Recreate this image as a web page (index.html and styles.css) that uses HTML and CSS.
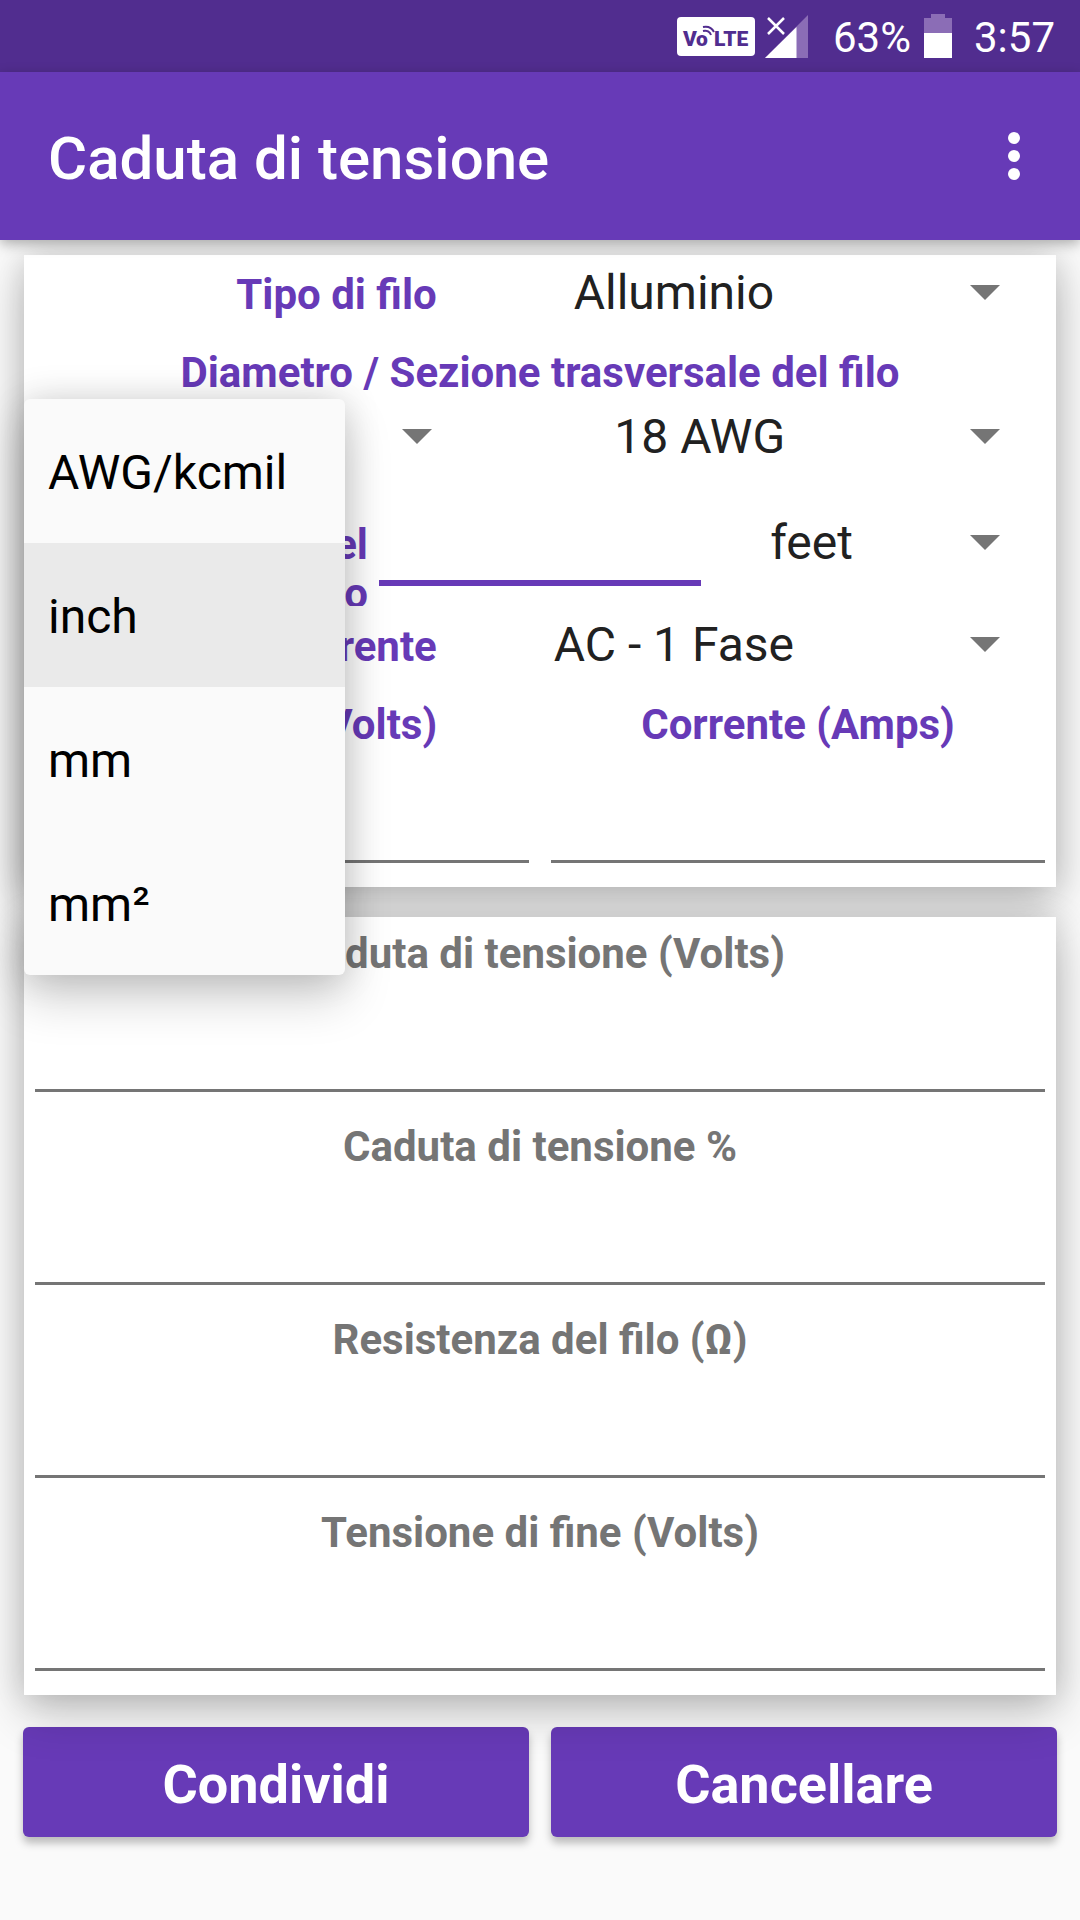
FILE: index.html
```html
<!DOCTYPE html>
<html lang="it">
    <head>
        <meta charset="utf-8">
        <meta name="viewport" content="width=device-width">
        <title>Caduta di tensione</title>
        <link rel="stylesheet" href="styles.css">
    </head>
    <body>
        <div class="status">
            <svg class="volte" width="78" height="39" viewBox="0 0 78 39">
                <rect width="78" height="39" rx="4" fill="#fff"/>
                <g class="volte-text">
                    <text x="6" y="29">V</text>
                    <text x="19" y="29">o</text>
                    <text x="37" y="29">LTE</text>
                </g>
                <g fill="none" stroke="#512d8f" stroke-width="2">
                    <path d="M26 10c5-1 9 1 11 5"/>
                    <path d="M26 14c4-1 7 1 8 4"/>
                </g>
            </svg>
            <svg class="signal" width="43" height="43" viewBox="0 0 43 43">
                <path d="M43 0v43H0z" fill="#8b6db6"/>
                <path d="M31.500 12v31H0z" fill="#fff"/>
                <path d="M3 3l16 16M19 3L3 19" stroke="#512d8f" stroke-width="5"/>
                <path d="M3 3l16 16M19 3L3 19" stroke="#fff" stroke-width="2.500"/>
            </svg>
            <span class="percent">63%</span>
            <svg class="battery" width="28" height="44" viewBox="0 0 28 44">
                <path d="M7 0h14v4h7v15H0V4h7z" fill="#8b6db6"/>
                <path d="M0 19h28v25H0z" fill="#fff"/>
            </svg>
            <span class="time">3:57</span>
        </div>
        <header class="header">
            <h1>Caduta di tensione</h1>
            <button class="more" type="button" aria-label="Altre opzioni">
                <svg width="12" height="48" viewBox="0 0 12 48" fill="#fff">
                    <circle cx="6" cy="6" r="6"/>
                    <circle cx="6" cy="24" r="6"/>
                    <circle cx="6" cy="42" r="6"/>
                </svg>
            </button>
        </header>

        <form class="page">
            <!-- dati -->
            <section class="card inputs">
                <div class="row wide">
                    <label for="tipo">Tipo di filo</label>
                    <div class="spinner">
                        <select id="tipo">
                            <option>Rame</option>
                            <option selected>Alluminio</option>
                        </select>
                    </div>
                </div>
                <label class="title" for="sezione">Diametro / Sezione trasversale del filo</label>
                <div class="row size">
                    <div class="spinner">
                        <select id="unita" aria-label="Unità">
                            <option selected>AWG/kcmil</option>
                            <option>inch</option>
                            <option>mm</option>
                            <option>mm²</option>
                        </select>
                    </div>
                    <div class="spinner">
                        <select id="sezione">
                            <option>18 AWG</option>
                        </select>
                    </div>
                    <div class="menu">
                        <button type="button">AWG/kcmil</button>
                        <button type="button" class="current">inch</button>
                        <button type="button">mm</button>
                        <button type="button">mm²</button>
                    </div>
                </div>
                <div class="row length">
                    <label for="lunghezza">Lunghezza del filo</label>
                    <input class="active" type="text" id="lunghezza">
                    <div class="spinner">
                        <select aria-label="Unità di lunghezza">
                            <option>feet</option>
                            <option>m</option>
                        </select>
                    </div>
                </div>
                <div class="row wide">
                    <label for="corrente">Tipo di corrente</label>
                    <div class="spinner">
                        <select id="corrente">
                            <option>AC - 1 Fase</option>
                            <option>DC</option>
                        </select>
                    </div>
                </div>
                <div class="row half">
                    <div class="field">
                        <label for="volts">Tensione (Volts)</label>
                        <input type="text" id="volts">
                    </div>
                    <div class="field">
                        <label for="amps">Corrente (Amps)</label>
                        <input type="text" id="amps">
                    </div>
                </div>
            </section>

            <!-- risultati -->
            <section class="card results">
                <div class="field">
                    <label for="r1">Caduta di tensione (Volts)</label>
                    <input type="text" id="r1" readonly>
                </div>
                <div class="field">
                    <label for="r2">Caduta di tensione %</label>
                    <input type="text" id="r2" readonly>
                </div>
                <div class="field">
                    <label for="r3">Resistenza del filo (Ω)</label>
                    <input type="text" id="r3" readonly>
                </div>
                <div class="field">
                    <label for="r4">Tensione di fine (Volts)</label>
                    <input type="text" id="r4" readonly>
                </div>
            </section>

            <div class="buttons">
                <button type="button">Condividi</button>
                <button type="reset">Cancellare</button>
            </div>
        </form>
    </body>
</html>
```
FILE: styles.css
```css
* {
    margin: 0;
    padding: 0;
    box-sizing: border-box;
}
body {
    background: #fafafa;
    font-family: Roboto, sans-serif;
    color: #212121;
}
button, input, select {
    font-family: inherit;
    border: 0;
    border-radius: 0;
    background: none;
    outline: none;
}

/* status bar */
.status {
    display: flex;
    align-items: center;
    justify-content: flex-end;
    height: 72px;
    padding-right: 25px;
    background: #512d8f;
    color: #fff;
    font-size: 42px;
    line-height: 49px;
}
.status span {
    padding-top: 2px;
}
.volte-text {
    fill: #512d8f;
    font-size: 21px;
    font-weight: 900;
}
.signal {
    margin-left: 10px;
}
.percent {
    margin-left: 25px;
}
.battery {
    margin-left: 13px;
}
.time {
    margin-left: 22px;
}

.header {
    position: relative;
    z-index: 2;
    display: flex;
    align-items: center;
    justify-content: space-between;
    height: 168px;
    padding: 0 30px 0 48px;
    background: #673ab7;
    box-shadow: 0 4px 12px rgba(0,0,0,.3);
}
.header h1 {
    padding-top: 6px;
    color: #fff;
    font-size: 60px;
    font-weight: 500;
    line-height: 70px;
}
.more {
    width: 72px;
    height: 96px;
}
.more svg {
    display: block;
    margin: 0 auto;
}

/* cards */
.page {
    padding-top: 15px;
}
.card {
    margin: 0 24px 30px;
    background: #fff;
    box-shadow: 0 18px 44px rgba(0,0,0,.22), 0 0 30px rgba(0,0,0,.14);
}
.inputs {
    padding-bottom: 24px;
}
.card label {
    font-size: 42px;
    font-weight: bold;
    line-height: 49px;
    color: #673ab7;
}
.results {
    position: relative;
    display: grid;
    gap: 30px;
    padding: 12px 0 24px;
}
.results label {
    color: #757575;
}
.title {
    display: block;
    margin: 19px 0 3px;
    text-align: center;
}

.row {
    display: grid;
    align-items: baseline;
}
.row > label {
    text-align: right;
}
.wide {
    grid-template-columns: 2fr 3fr;
}
.wide:first-child {
    padding: 1px 0;
}
.size {
    position: relative;
    z-index: 1;
    grid-template-columns: 9fr 11fr;
}
.length {
    grid-template-columns: 1fr 1fr 1fr;
    height: 102px;
    margin-top: 34px;
}
.length label {
    height: 86px;
    padding-left: 24px;
    overflow: hidden;
}
.half {
    grid-template-columns: 1fr 1fr;
    padding-top: 20px;
}

.spinner {
    display: grid;
    align-items: center;
}
.spinner select,
.spinner::after {
    grid-area: 1 / 1;
}
.spinner select {
    width: 100%;
    height: 72px;
    padding: 2px 145px 0 0;
    appearance: none;
    color: #212121;
    font-size: 48px;
    line-height: 56px;
    text-align-last: center;
}
.spinner::after {
    content: "";
    justify-self: end;
    margin-right: 56px;
    border: 15px solid transparent;
    border-top-color: #757575;
    border-bottom: 0;
    pointer-events: none;
}

.field {
    display: grid;
    padding: 0 11px;
    text-align: center;
}
.card input {
    width: 100%;
    height: 114px;
    border-bottom: 3px solid #757575;
    color: #212121;
    font-size: 48px;
    text-align: center;
}
.length .active {
    align-self: start;
    width: auto;
    min-width: 0;
    height: 80px;
    margin: 0 11px;
    border-bottom: 6px solid #673ab7;
}

/* open drop-down */
.menu {
    position: absolute;
    top: -1px;
    left: 0;
    width: 321px;
    border-radius: 6px;
    background: #fafafa;
    box-shadow: 0 24px 48px rgba(0,0,0,.18), 0 0 36px rgba(0,0,0,.16);
    overflow: hidden;
}
.menu button {
    display: block;
    width: 100%;
    height: 144px;
    padding: 4px 24px 0;
    color: #000;
    font-size: 48px;
    line-height: 56px;
    text-align: left;
}
.menu .current {
    background: #eaeaea;
}

.buttons {
    display: grid;
    grid-template-columns: 1fr 1fr;
    gap: 22px;
    padding: 2px 23px 83px;
}
.buttons button {
    height: 110px;
    padding-top: 4px;
    border-radius: 6px;
    background: #673ab7;
    box-shadow: 0 6px 9px rgba(0,0,0,.26);
    color: #fff;
    font-size: 54px;
    font-weight: bold;
    line-height: 63px;
}
```
